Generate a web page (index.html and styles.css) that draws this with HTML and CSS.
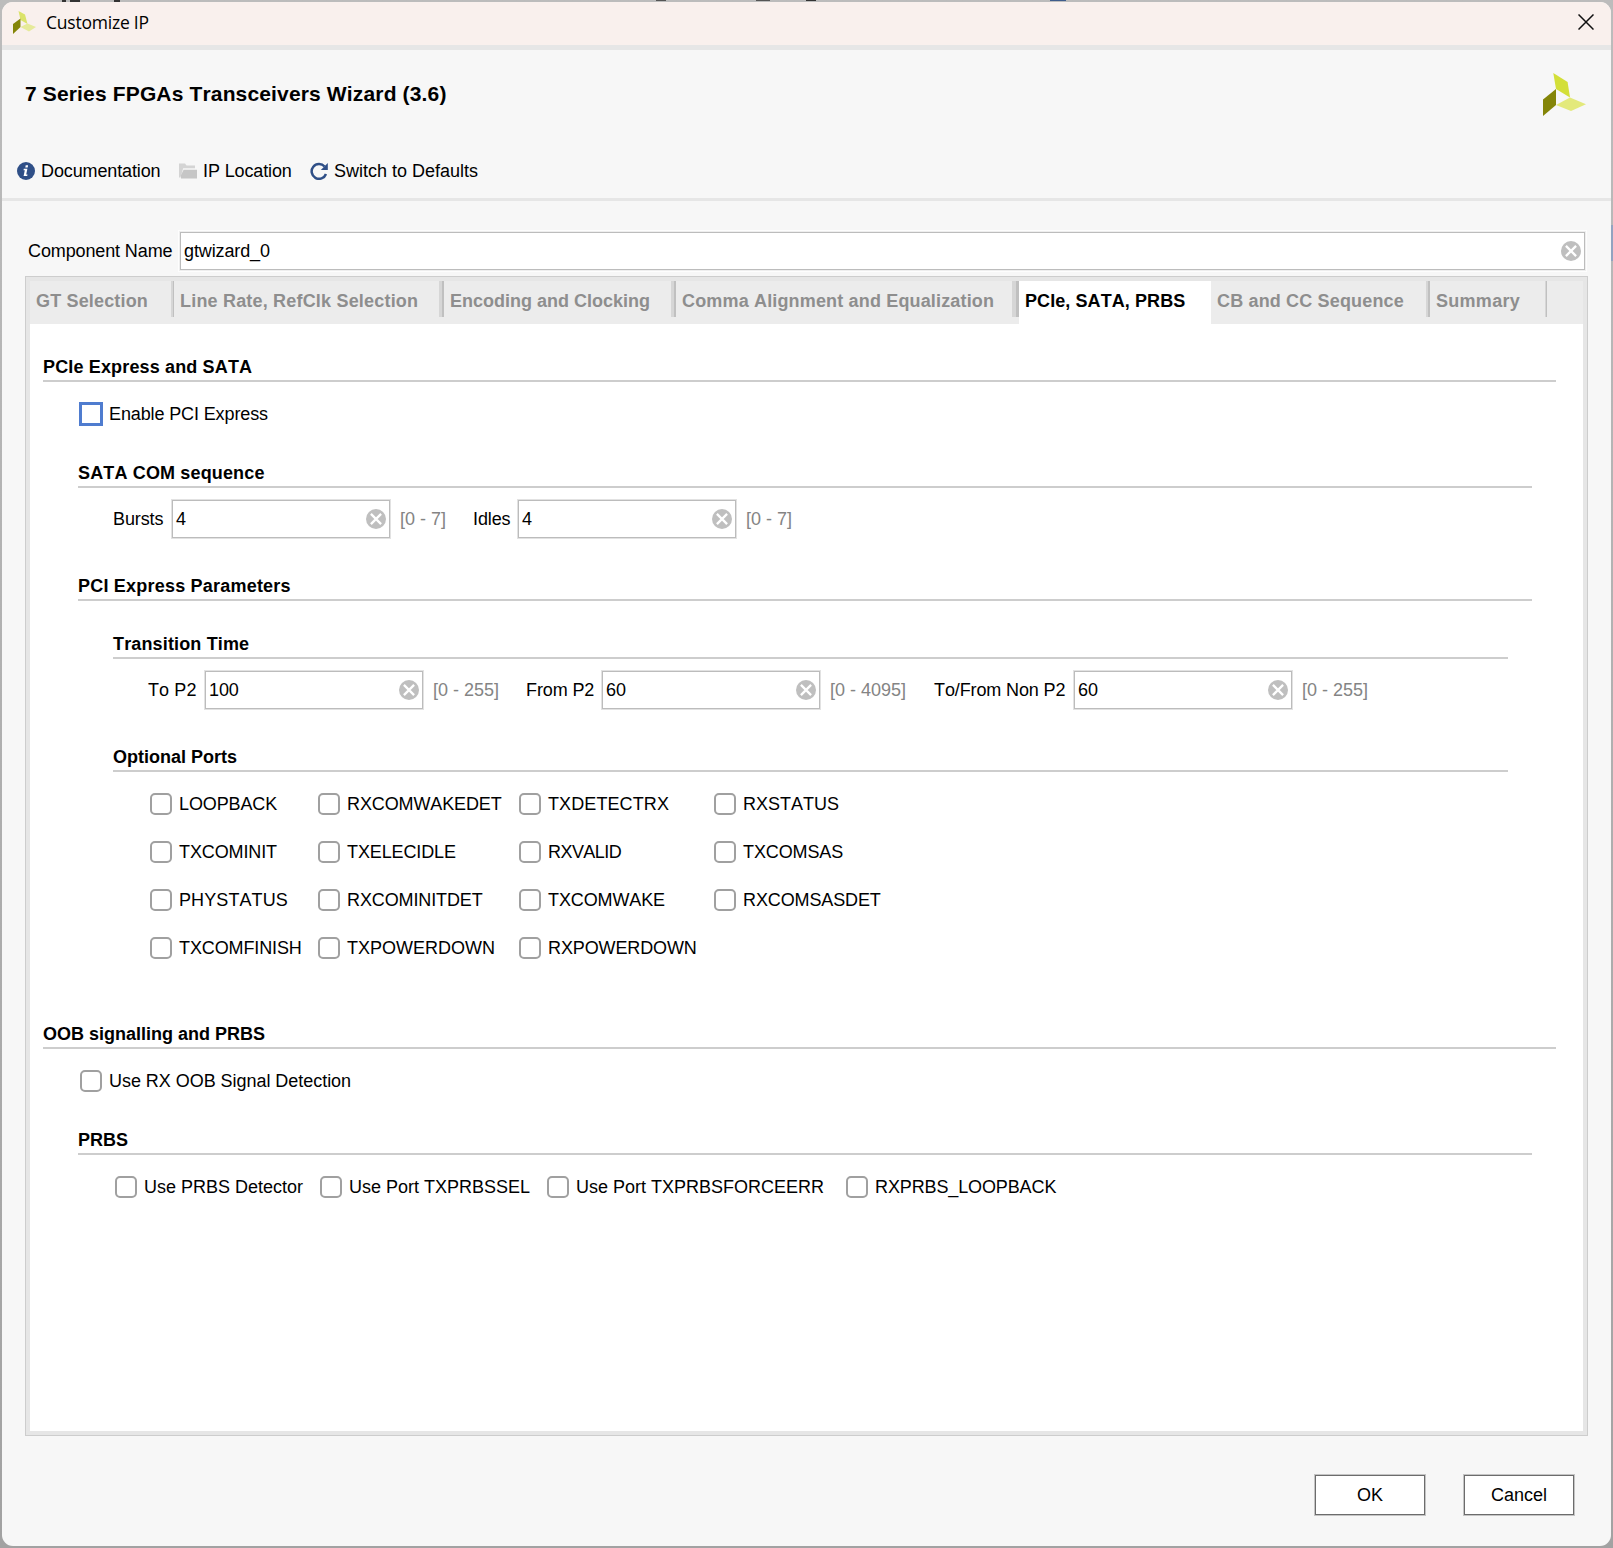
FILE: index.html
```html
<!DOCTYPE html>
<html lang="en">
<head>
<meta charset="utf-8">
<title>Customize IP</title>
<link rel="stylesheet" href="styles.css">
</head>
<body>
<svg class="defs" aria-hidden="true">
  <symbol id="logo" viewBox="0 0 44 44">
    <path fill="#d3df38" d="M10.3 0 24.6 9 27 24.5 13 16z"/>
    <path fill="#848508" d="M13 16V32L0 43V26.5z"/>
    <path fill="#e3e97b" d="M27 24.5 43 31.3 28 38 13 32z"/>
  </symbol>
  <symbol id="clear" viewBox="0 0 20 20">
    <circle cx="10" cy="10" r="10" fill="#bfbfbf"/>
    <path d="M4.9 4.9 15.1 15.1M15.1 4.9 4.9 15.1" stroke="#fff" stroke-width="2.3"/>
  </symbol>
</svg>
<div class="window">
  <div class="titlebar">
    <svg class="app-icon" viewBox="0 0 23 23"><path fill="#dbe36a" d="M5.5 0 12 3.5 14.5 13 7.5 9z"/><path fill="#848508" d="M7.5 7.5V16L0 23V13z"/><path fill="#e6ea9a" d="M14.5 12.5 23 16 16 20.5 7.5 16z"/></svg>
    <span class="titlebar-text">Customize IP</span>
    <svg class="close" viewBox="0 0 16 16"><path d="M.5.5l15 15M15.5.5l-15 15" stroke="#111" stroke-width="1.5"/></svg>
  </div>
  <div class="header">
    <div class="heading">
      <h1 class="title">7 Series FPGAs Transceivers Wizard (3.6)</h1>
      <svg class="brand"><use href="#logo"/></svg>
    </div>
    <div class="toolbar">
      <div class="tool tool-doc">
        <svg class="tool-icon" viewBox="0 0 18 18"><circle cx="9" cy="9" r="9" fill="#2f4f87"/><path d="M8.7 3.2h2.4l-.4 2.2H8.3zM6.8 6.8h3.6L9.2 12.5h1.3l-.3 1.5H6.6l1.2-5.7H6.5z" fill="#fff"/></svg>
        <span>Documentation</span>
      </div>
      <div class="tool tool-loc">
        <svg class="tool-icon" viewBox="0 0 18 18"><path d="M0 1.5h6l1.5 2H16v2.7H4.2L1.5 15.5H0z" fill="#d4d4d4"/><path d="M4.6 7.8H18V16.5H2V13z" fill="#c6c6c6"/></svg>
        <span>IP Location</span>
      </div>
      <div class="tool even">
        <svg class="tool-icon" viewBox="0 0 18 18"><path d="M14.6 4.5A7.4 7.4 0 1 0 16 12" fill="none" stroke="#2f4f87" stroke-width="2.5"/><path d="M17.8 1v7H10.8z" fill="#2f4f87"/></svg>
        <span>Switch to Defaults</span>
      </div>
    </div>
  </div>
  <div class="component">
    <span class="component-label">Component Name</span>
    <div class="field field-wide"><span>gtwizard_0</span><svg class="clear"><use href="#clear"/></svg></div>
  </div>
  <div class="panel">
    <div class="tabs">
      <div class="tab t1">GT Selection</div>
      <div class="tab t2">Line Rate, RefClk Selection</div>
      <div class="tab t3">Encoding and Clocking</div>
      <div class="tab t4">Comma Alignment and Equalization</div>
      <div class="tab t5 selected">PCIe, SATA, PRBS</div>
      <div class="tab t6">CB and CC Sequence</div>
      <div class="tab t7">Summary</div>
    </div>
    <div class="content">
      <section class="group">
        <h2 class="legend loose">PCIe Express and SATA</h2>
        <div class="checks"><label class="check"><i class="box focused"></i>Enable PCI Express</label></div>
        <section class="group nested">
          <h2 class="legend loose">SATA COM sequence</h2>
          <div class="fields sata">
            <span>Bursts</span><div class="field"><span>4</span><svg class="clear"><use href="#clear"/></svg></div><span class="range">[0 - 7]</span>
            <span>Idles</span><div class="field"><span>4</span><svg class="clear"><use href="#clear"/></svg></div><span class="range">[0 - 7]</span>
          </div>
        </section>
        <section class="group nested">
          <h2 class="legend looser">PCI Express Parameters</h2>
          <section class="group nested first">
            <h2 class="legend loose">Transition Time</h2>
            <div class="fields transition">
              <span class="wide">To P2</span><div class="field"><span>100</span><svg class="clear"><use href="#clear"/></svg></div><span class="range">[0 - 255]</span>
              <span>From P2</span><div class="field"><span>60</span><svg class="clear"><use href="#clear"/></svg></div><span class="range">[0 - 4095]</span>
              <span>To/From Non P2</span><div class="field"><span>60</span><svg class="clear"><use href="#clear"/></svg></div><span class="range">[0 - 255]</span>
            </div>
          </section>
          <section class="group nested">
            <h2 class="legend">Optional Ports</h2>
            <div class="checks ports">
              <label class="check"><i class="box"></i>LOOPBACK</label>
              <label class="check"><i class="box"></i>RXCOMWAKEDET</label>
              <label class="check wide"><i class="box"></i>TXDETECTRX</label>
              <label class="check even"><i class="box"></i>RXSTATUS</label>
              <label class="check"><i class="box"></i>TXCOMINIT</label>
              <label class="check"><i class="box"></i>TXELECIDLE</label>
              <label class="check tight"><i class="box"></i>RXVALID</label>
              <label class="check"><i class="box"></i>TXCOMSAS</label>
              <label class="check wide"><i class="box"></i>PHYSTATUS</label>
              <label class="check"><i class="box"></i>RXCOMINITDET</label>
              <label class="check"><i class="box"></i>TXCOMWAKE</label>
              <label class="check"><i class="box"></i>RXCOMSASDET</label>
              <label class="check"><i class="box"></i>TXCOMFINISH</label>
              <label class="check even"><i class="box"></i>TXPOWERDOWN</label>
              <label class="check"><i class="box"></i>RXPOWERDOWN</label>
            </div>
          </section>
        </section>
      </section>
      <section class="group oob">
        <h2 class="legend">OOB signalling and PRBS</h2>
        <div class="checks"><label class="check signal"><i class="box"></i>Use RX OOB Signal Detection</label></div>
        <section class="group nested">
          <h2 class="legend">PRBS</h2>
          <div class="checks prbs">
            <label class="check even"><i class="box"></i>Use PRBS Detector</label>
            <label class="check even"><i class="box"></i>Use Port TXPRBSSEL</label>
            <label class="check even"><i class="box"></i>Use Port TXPRBSFORCEERR</label>
            <label class="check"><i class="box"></i>RXPRBS_LOOPBACK</label>
          </div>
        </section>
      </section>
    </div>
  </div>
  <div class="footer">
    <button class="button">OK</button>
    <button class="button">Cancel</button>
  </div>
</div>
</body>
</html>
```
FILE: styles.css
```css
* { box-sizing: border-box; }
body {
  margin: 0;
  height: 1548px;
  padding: 2px;
  /* slivers of the desktop behind the window, then the window's shadow edge */
  background:
    linear-gradient(#333, #333) 62px 0 / 4px 2px no-repeat,
    linear-gradient(#333, #333) 70px 0 / 10px 2px no-repeat,
    linear-gradient(#333, #333) 114px 0 / 6px 2px no-repeat,
    linear-gradient(#555, #555) 656px 0 / 10px 1px no-repeat,
    linear-gradient(#555, #555) 756px 0 / 14px 1px no-repeat,
    linear-gradient(#333, #333) 806px 0 / 10px 1px no-repeat,
    linear-gradient(#3f5d8c, #3f5d8c) 1050px 0 / 16px 1px no-repeat,
    linear-gradient(#93a3c0, #93a3c0) 1611px 225px / 2px 36px no-repeat,
    linear-gradient(#bcbcbc, #a2a2a2);
  font: 18px/20px "Liberation Sans", Arial, sans-serif;
  font-kerning: none;
  letter-spacing: -.12px;
  color: #000;
  white-space: nowrap;
  overflow: hidden;
}
.defs { display: none; }
svg { display: block; flex: none; }
.window {
  height: 1544px;
  width: 1609px;
  background: #f7f7f7;
  border-radius: 11px;
  overflow: hidden;
  display: flex;
  flex-direction: column;
}
.titlebar {
  height: 48px;
  border-bottom: 5px solid #e6e6e6;
  background: #f9f0ed;
  display: flex;
  align-items: center;
  padding: 0 17px 3px 11px;
}
.app-icon { width: 23px; height: 23px; }
.titlebar-text {
  margin-left: 10px;
  flex: 1;
  font: 17.5px/24px "Open Sans", "Noto Sans", sans-serif;
  letter-spacing: -.22px;
}
.close { width: 16px; height: 16px; }
.header {
  height: 151px;
  border-bottom: 3px solid #e6e6e6;
  padding: 23px 24px 0 15px;
}
.heading { display: flex; justify-content: space-between; height: 88px; }
.title {
  margin: 9px 0 0 8px;
  font-size: 21px;
  line-height: 24px;
  letter-spacing: .15px;
}
.brand { width: 44px; height: 44px; }
.toolbar { display: flex; }
.tool { display: flex; align-items: center; gap: 6px; }
.tool-doc { width: 162px; }
.tool-loc { width: 131px; }
.tool-icon { width: 18px; height: 18px; }
.component {
  margin: 31px 26px 0;
  height: 38px;
  display: flex;
  align-items: center;
}
.component-label { width: 152px; }
.field {
  height: 38px;
  width: 218px;
  background: #fff;
  border: 1px solid #bcbcbc;
  box-shadow: 0 0 0 1px #e2e2e2;
  display: flex;
  align-items: center;
  justify-content: space-between;
  padding: 0 3px;
}
.field-wide { width: auto; flex: 1; box-shadow: 0 0 0 1px #eee, 0 0 0 2px #fdfdfd; }
.clear { width: 20px; height: 20px; }
.panel {
  margin: 6px 23px 0;
  height: 1160px;
  border: 1px solid #cdcdcd;
  background: #fff;
  box-shadow: inset 0 0 0 4px #e6e6e6;
  padding: 4px;
}
.tabs { display: flex; height: 43px; background: #ececec; }
.tab {
  padding: 10px 0 0 6px;
  height: 36px;
  font-weight: bold;
  color: #8e8e8e;
  letter-spacing: .16px;
  border-right: 2px solid #c0c0c0;
  box-shadow: inset -3px 0 0 #d6d6d6;
}
.t1 { width: 144px; border-right-width: 1px; box-shadow: inset -2px 0 0 #d6d6d6; }
.t2 { width: 270px; letter-spacing: .19px; }
.t3 { width: 232px; letter-spacing: 0; }
.t4 { width: 343px; border-right-width: 3px; box-shadow: inset -4px 0 0 #d6d6d6; }
.t5 { width: 192px; letter-spacing: .08px; }
.t6 { width: 219px; box-shadow: inset -2px 0 0 #d6d6d6; }
.t7 { width: 117px; letter-spacing: .28px; border-right-width: 1px; box-shadow: inset -1px 0 0 #d6d6d6; }
.tab.selected {
  height: 43px;
  color: #000;
  background: #fff;
  border: 0;
  box-shadow: none;
}
.content { padding: 33px 27px 0 13px; }
.nested { margin: 37px 24px 0 35px; }
.nested.first { margin-top: 33px; }
.oob { margin-top: 64px; }
.legend {
  margin: 0;
  font-size: 18px;
  line-height: 20px;
  letter-spacing: 0;
  padding-bottom: 3px;
  border-bottom: 2px solid #cdcdcd;
}
.loose { letter-spacing: .15px; }
.looser { letter-spacing: .21px; }
.checks { margin: 20px 0 0 36px; display: grid; row-gap: 24px; justify-content: start; }
.ports { grid-template-columns: 168px 201px 195px auto; }
.prbs { grid-template-columns: 205px 227px 299px auto; }
.check { display: flex; align-items: center; height: 24px; gap: 7px; padding-left: 1px; }
.even { letter-spacing: 0; }
.wide { letter-spacing: .1px; }
.tight { letter-spacing: -.55px; }
.signal { letter-spacing: -.04px; }
.box {
  width: 22px;
  height: 22px;
  border: 2px solid #a0a0a0;
  border-radius: 5px;
  background: #fff;
}
.box.focused {
  width: 24px;
  height: 24px;
  margin: 0 -1px;
  border: 3px solid #4f7ccf;
  border-radius: 0;
}
.fields { margin: 11px 0 0 35px; height: 40px; display: grid; align-items: center; }
.sata { grid-template-columns: 59px 228px 73px 45px 228px auto; }
.transition { grid-template-columns: 57px 228px 93px 76px 228px 104px 140px 228px auto; }
.range { color: #848484; letter-spacing: 0; }
.footer {
  display: flex;
  justify-content: flex-end;
  gap: 39px;
  padding: 39px 37px 0 0;
}
.button {
  width: 110px;
  height: 40px;
  padding: 0 0 1px;
  border: 1px solid #6c6c6c;
  box-shadow: 0 0 0 1px #c4c4c4;
  background: #fff;
  color: #000;
  font: inherit;
}
```
